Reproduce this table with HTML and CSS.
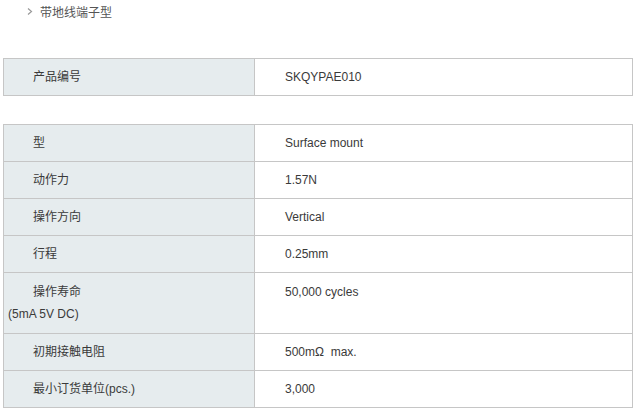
FILE: index.html
```html
<!DOCTYPE html>
<html lang="zh-CN">
<head>
<meta charset="utf-8">
<title>带地线端子型</title>
<link rel="stylesheet" href="styles.css">
</head>
<body>
<div class="crumb">
  <svg class="arrow" width="6" height="7" viewBox="0 0 6 7"><path d="M1 0.5 L4.5 3.5 L1 6.5" fill="none" stroke="#9a9a9a" stroke-width="1.2"/></svg>
  <span class="crumb-text">带地线端子型</span>
</div>
<table class="spec first">
  <tr><th>产品编号</th><td>SKQYPAE010</td></tr>
</table>
<table class="spec">
  <tr><th>型</th><td>Surface mount</td></tr>
  <tr><th>动作力</th><td>1.57N</td></tr>
  <tr><th>操作方向</th><td>Vertical</td></tr>
  <tr><th>行程</th><td>0.25mm</td></tr>
  <tr class="tall"><th>操作寿命<br>(5mA 5V DC)</th><td class="top">50,000 cycles</td></tr>
  <tr><th>初期接触电阻</th><td>500mΩ&nbsp; max.</td></tr>
  <tr><th>最小订货单位(pcs.)</th><td>3,000</td></tr>
</table>
</body>
</html>
```
FILE: styles.css
```css
html, body {
  margin: 0;
  padding: 0;
  background: #ffffff;
}
body {
  font-family: "Liberation Sans", "Noto Sans CJK SC", sans-serif;
  font-size: 12px;
  color: #3a3a3a;
}
.crumb {
  display: flex;
  align-items: center;
  height: 23px;
  padding-left: 27px;
}
.arrow {
  margin-right: 7px;
}
.crumb-text {
  color: #555555;
}
.spec {
  border-collapse: collapse;
  width: 630px;
  margin-left: 3px;
  margin-top: 28px;
  table-layout: fixed;
}
.spec.first {
  margin-top: 35px;
}
.spec th, .spec td {
  border: 1px solid #c6c6c6;
  height: 36px;
  padding: 0;
  line-height: 22px;
  font-weight: normal;
  text-align: left;
  vertical-align: middle;
}
.spec th {
  width: 246px;
  background: #e6ecee;
  padding-left: 4px;
  text-indent: 25px;
}
.spec td {
  padding-left: 30px;
  background: #ffffff;
}
.spec .tall th {
  height: 60px;
}
.spec .tall td.top {
  height: 52px;
  vertical-align: top;
  padding-top: 8px;
}
```
